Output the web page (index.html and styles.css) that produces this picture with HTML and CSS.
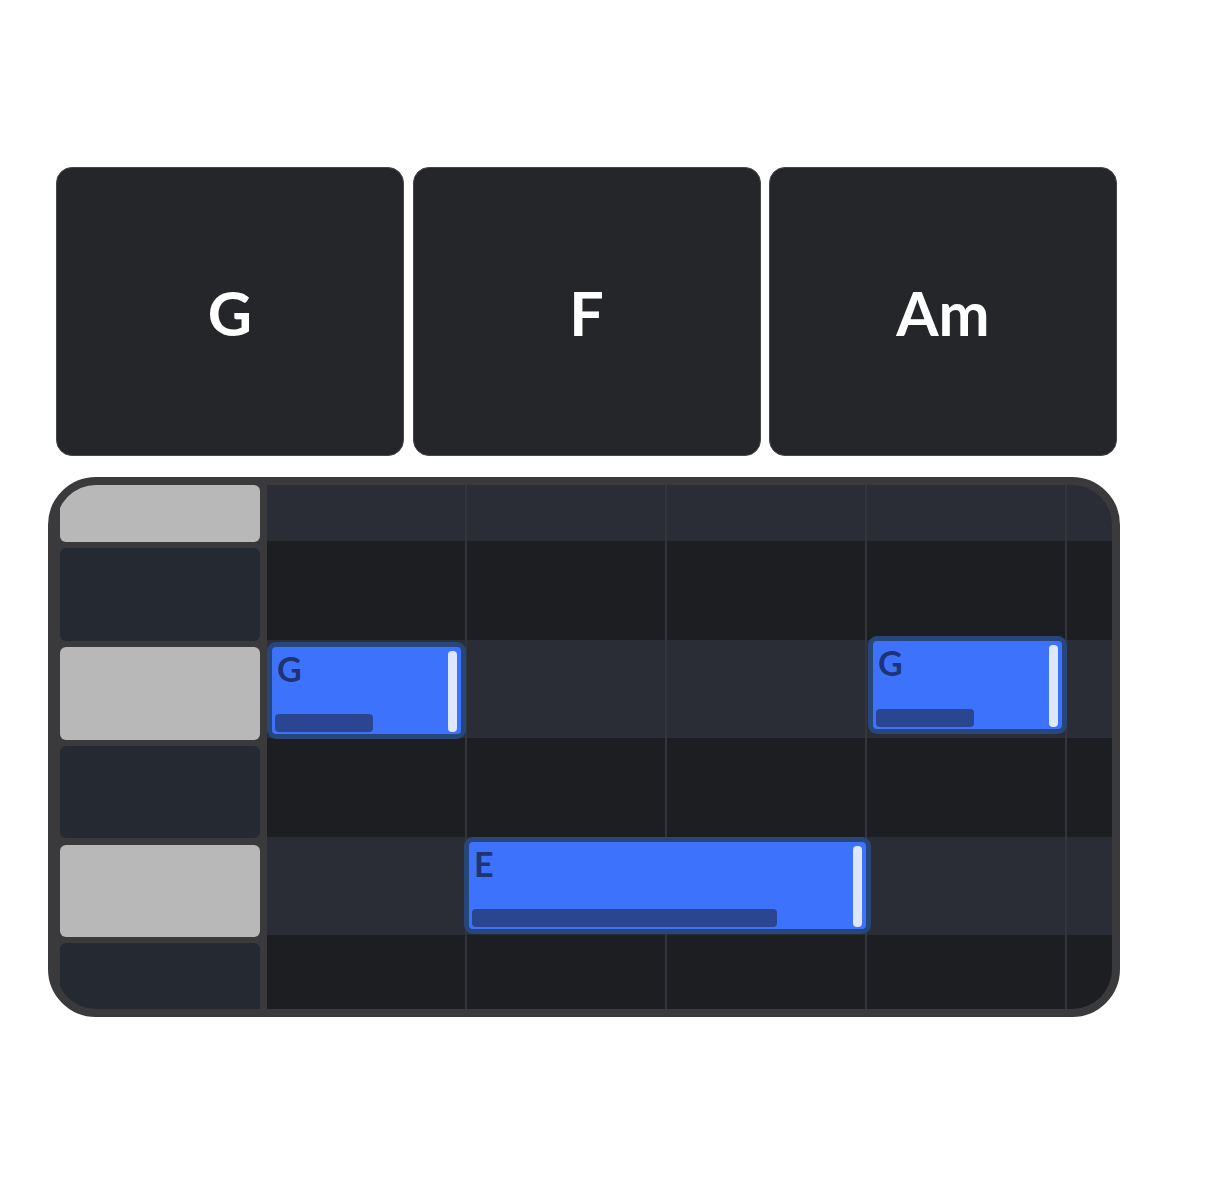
FILE: index.html
```html
<!DOCTYPE html>
<html>
<head>
<meta charset="utf-8">
<link rel="stylesheet" href="styles.css">
</head>
<body>
<div class="page">
  <div class="chords">
    <div class="chord">G</div>
    <div class="chord">F</div>
    <div class="chord">Am</div>
  </div>
  <div class="roll">
    <div class="keys">
      <div class="key white first"></div>
      <div class="key black"></div>
      <div class="key white"></div>
      <div class="key black"></div>
      <div class="key white"></div>
      <div class="key black last"></div>
    </div>
    <div class="grid">
      <div class="row light head"><div class="cell"></div><div class="cell"></div><div class="cell"></div><div class="cell"></div><div class="cell"></div></div>
      <div class="row dark"><div class="cell"></div><div class="cell"></div><div class="cell"></div><div class="cell"></div><div class="cell"></div></div>
      <div class="row light"><div class="cell"></div><div class="cell"></div><div class="cell"></div><div class="cell"></div><div class="cell"></div></div>
      <div class="row dark"><div class="cell"></div><div class="cell"></div><div class="cell"></div><div class="cell"></div><div class="cell"></div></div>
      <div class="row light"><div class="cell"></div><div class="cell"></div><div class="cell"></div><div class="cell"></div><div class="cell"></div></div>
      <div class="row dark tail"><div class="cell"></div><div class="cell"></div><div class="cell"></div><div class="cell"></div><div class="cell"></div></div>

      <div class="note n1"><span class="label">G</span><span class="bar b1"></span><span class="handle"></span></div>
      <div class="note n2"><span class="label">G</span><span class="bar b2"></span><span class="handle"></span></div>
      <div class="note n3"><span class="label">E</span><span class="bar b3"></span><span class="handle"></span></div>
    </div>
  </div>
</div>
</body>
</html>
```
FILE: styles.css
```css
html, body {
  margin: 0;
  padding: 0;
  background: #ffffff;
}
.page {
  padding-top: 167px;
  font-family: "Lato", "Noto Sans", sans-serif;
}
.chords {
  margin-left: 56px;
  width: 1061px;
  height: 289px;
  display: grid;
  grid-template-columns: 1fr 1fr 1fr;
  gap: 8.5px;
}
.chord {
  background: #25262a;
  border: 1.5px solid #46474b;
  border-radius: 16px;
  display: flex;
  align-items: center;
  justify-content: center;
  color: #ffffff;
  font-weight: 700;
  font-size: 61px;
  padding-top: 2px;
  box-sizing: border-box;
}
.roll {
  margin-top: 21px;
  margin-left: 48px;
  width: 1072px;
  height: 540px;
  box-sizing: border-box;
  border: 8px solid #3a3a3c;
  border-radius: 48px;
  background: #3a3a3c;
  overflow: hidden;
  display: flex;
}
.keys {
  width: 211px;
  box-sizing: border-box;
  padding: 0 7px 0 3.5px;
  display: flex;
  flex-direction: column;
  gap: 6.3px;
  flex-shrink: 0;
}
.key {
  height: 92.5px;
  border-radius: 6px;
  flex-shrink: 0;
}
.key.first { height: 57px; }
.key.white { background: #b8b8b8; }
.key.black { background: #252a32; }
.grid {
  position: relative;
  flex: 1;
  display: flex;
  flex-direction: column;
}
.row {
  display: flex;
  height: 98.5px;
  flex-shrink: 0;
}
.row.head { height: 56px; }
.row.tail { flex: 1; }
.row.light { background: #2a2d35; }
.row.dark { background: #1c1e22; }
.cell {
  width: 198px;
  border-right: 2px solid #32353c;
  flex-shrink: 0;
}
.cell:last-child {
  border-right: none;
  flex: 1;
}
.note {
  position: absolute;
  box-sizing: border-box;
  border: 5px solid #27467a;
  border-radius: 9px;
  background: #3d73fc;
  display: flex;
  flex-direction: column;
  justify-content: space-between;
  padding: 5px 18px 2px 3px;
}
.n1 { left: 0; top: 157px; width: 199px; height: 97px; }
.n2 { left: 601px; top: 151px; width: 199px; height: 98px; }
.n3 { left: 197px; top: 352px; width: 407px; height: 97px; }
.label {
  color: #1f3474;
  font-weight: 700;
  font-size: 34px;
  line-height: 34px;
  padding-left: 2px;
}
.bar {
  display: block;
  height: 18px;
  border-radius: 4px;
  background: #2a4690;
}
.b1 { width: 98px; }
.b2 { width: 98px; }
.b3 { width: 305px; }
.handle {
  position: absolute;
  right: 4px;
  top: 4px;
  bottom: 2px;
  width: 9px;
  border-radius: 4px;
  background: #dfe7ff;
}
```
